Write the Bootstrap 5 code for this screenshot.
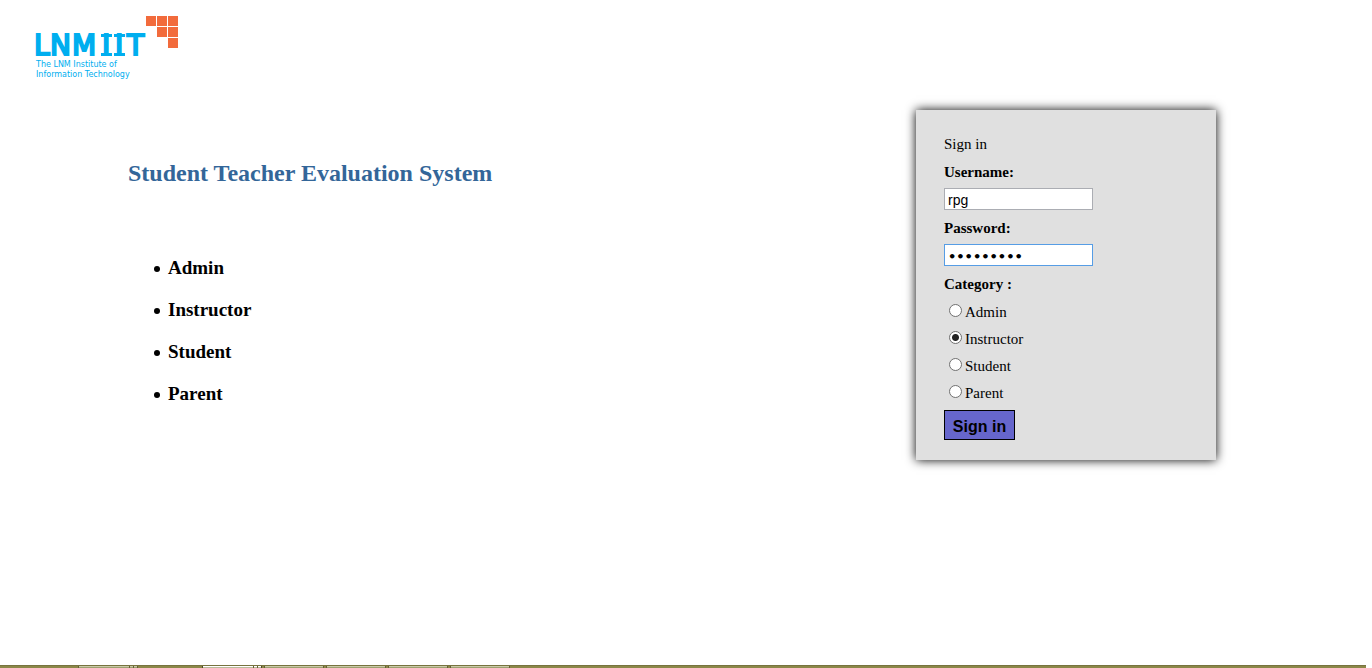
<!DOCTYPE html>
<html lang="en">
<head>
<meta charset="utf-8">
<meta name="viewport" content="width=device-width, initial-scale=1">
<title>Student Teacher Evaluation System</title>
<link href="https://cdn.jsdelivr.net/npm/bootstrap@5.3.0/dist/css/bootstrap.min.css" rel="stylesheet">
<style>
  body { font-family: "Liberation Serif", "Times New Roman", serif; font-size: 15px; color: #000; background: #fff; }
  .logo { margin: 12px 0 0 32px; width: 150px; height: 72px; }
  .logo text { font-family: "DejaVu Sans", Verdana, sans-serif; fill: #00aeef; }
  .logo .wordmark { stroke: #00aeef; stroke-width: 2px; }
  .intro { padding: 74px 0 0 128px; }
  .intro h1 { font-size: 24px; line-height: 30px; font-weight: 700; color: #336699; margin-bottom: 69px; }
  .intro ul { padding-left: 26px; font-size: 19px; line-height: 22px; font-weight: 700; gap: 20px; }
  .intro li { gap: 8px; }
  .intro li::before { content: ""; width: 6px; height: 6px; margin-top: 2px; border-radius: 50%; background: #000; }
  .login-panel { width: 300px; margin: 26px 156px 0 0; padding: 24px 28px 20px; background: #e0e0e0; box-shadow: 0 0 10px #000; line-height: 20px; }
  .field-name { font-weight: 700; margin-top: 8px; }
  .login-panel input.text-field { width: 149px; height: 22px; margin-top: 6px; padding: 2px 3px 0; font: 14px "Liberation Sans", Arial, sans-serif; color: #000; border: 1px solid #abadb3; border-radius: 0; background: #fff; outline: 0; }
  .login-panel input.is-active { font: 700 13px "DejaVu Sans", sans-serif; border-color: #569de5; }
  .choice { height: 27px; padding-left: 5px; gap: 3px; }
  .choice input { appearance: none; width: 13px; height: 13px; margin: 0 0 3px; border: 1px solid #707070; border-radius: 50%; background: #fff; }
  .choice input:checked { background: radial-gradient(circle, #222 3px, #fff 4px); }
  .submit { width: 71px; height: 30px; padding: 3px 0 0; font: 700 16px "Liberation Sans", Arial, sans-serif; color: #000; background: #6666cc; border: 1px solid #000; border-radius: 0; }
  .taskbar { height: 3px; margin-right: 6px; padding-left: 78px; gap: 2px; background: #8b8748; border-top: 1px solid #77733f; }
  .task { width: 60px; height: 2px; border: solid #636034; border-width: 0 1px; background: linear-gradient(#c9caa8 1px, #9da070 1px); }
  .task-first { margin-right: 62px; }
  .task-current { border-color: #4b4828; background: linear-gradient(#fff 1px, #b9bb9a 1px); }
  .task-grip { width: 5px; height: 2px; margin-left: 50px; border: solid #636034; border-width: 0 1px; }
</style>
</head>
<body>
<div class="min-vh-100 d-flex flex-column">
  <header class="d-flex">
    <svg class="logo" viewBox="0 0 150 72" role="img" aria-label="LNMIIT">
      <g fill="#f26b3c">
        <rect x="114" y="4" width="10" height="10"/><rect x="125" y="4" width="10" height="10"/><rect x="136" y="4" width="10" height="10"/>
        <rect x="125" y="15" width="10" height="10"/><rect x="136" y="15" width="10" height="10"/><rect x="136" y="26" width="10" height="10"/>
      </g>
      <text class="wordmark" y="43" font-size="28"><tspan x="2 18 40 70 83 95">LNMIIT</tspan></text>
      <g fill="#00aeef">
        <rect x="69" y="22" width="11" height="3"/><rect x="69" y="41" width="11" height="3"/>
        <rect x="82" y="22" width="11" height="3"/><rect x="82" y="41" width="11" height="3"/>
      </g>
      <text x="4" y="55" font-size="8">The LNM Institute of</text>
      <text x="4" y="65" font-size="8">Information Technology</text>
    </svg>
  </header>
  <main class="d-flex justify-content-between align-items-start flex-grow-1">
    <section class="intro">
      <h1>Student Teacher Evaluation System</h1>
      <ul class="list-unstyled d-flex flex-column m-0">
        <li class="d-flex align-items-center">Admin</li>
        <li class="d-flex align-items-center">Instructor</li>
        <li class="d-flex align-items-center">Student</li>
        <li class="d-flex align-items-center">Parent</li>
      </ul>
    </section>
    <form class="login-panel d-flex flex-column align-items-start">
      <div>Sign in</div>
      <label class="field-name" for="user">Username:</label>
      <input class="text-field" id="user" type="text" value="rpg">
      <label class="field-name" for="pass">Password:</label>
      <input class="text-field is-active" id="pass" type="password" value="password1">
      <div class="field-name mb-1" id="category">Category :</div>
      <div role="radiogroup" aria-labelledby="category">
        <label class="choice d-flex align-items-center"><input type="radio" name="category">Admin</label>
        <label class="choice d-flex align-items-center"><input type="radio" name="category" checked>Instructor</label>
        <label class="choice d-flex align-items-center"><input type="radio" name="category">Student</label>
        <label class="choice d-flex align-items-center"><input type="radio" name="category">Parent</label>
      </div>
      <button class="submit mt-1" type="button">Sign in</button>
    </form>
  </main>
  <footer class="taskbar d-flex">
    <span class="task task-first"><span class="task-grip d-block"></span></span>
    <span class="task task-current"><span class="task-grip d-block"></span></span>
    <span class="task"></span>
    <span class="task"></span>
    <span class="task"></span>
    <span class="task"></span>
  </footer>
</div>
<script src="https://cdn.jsdelivr.net/npm/bootstrap@5.3.0/dist/js/bootstrap.bundle.min.js"></script>
</body>
</html>
